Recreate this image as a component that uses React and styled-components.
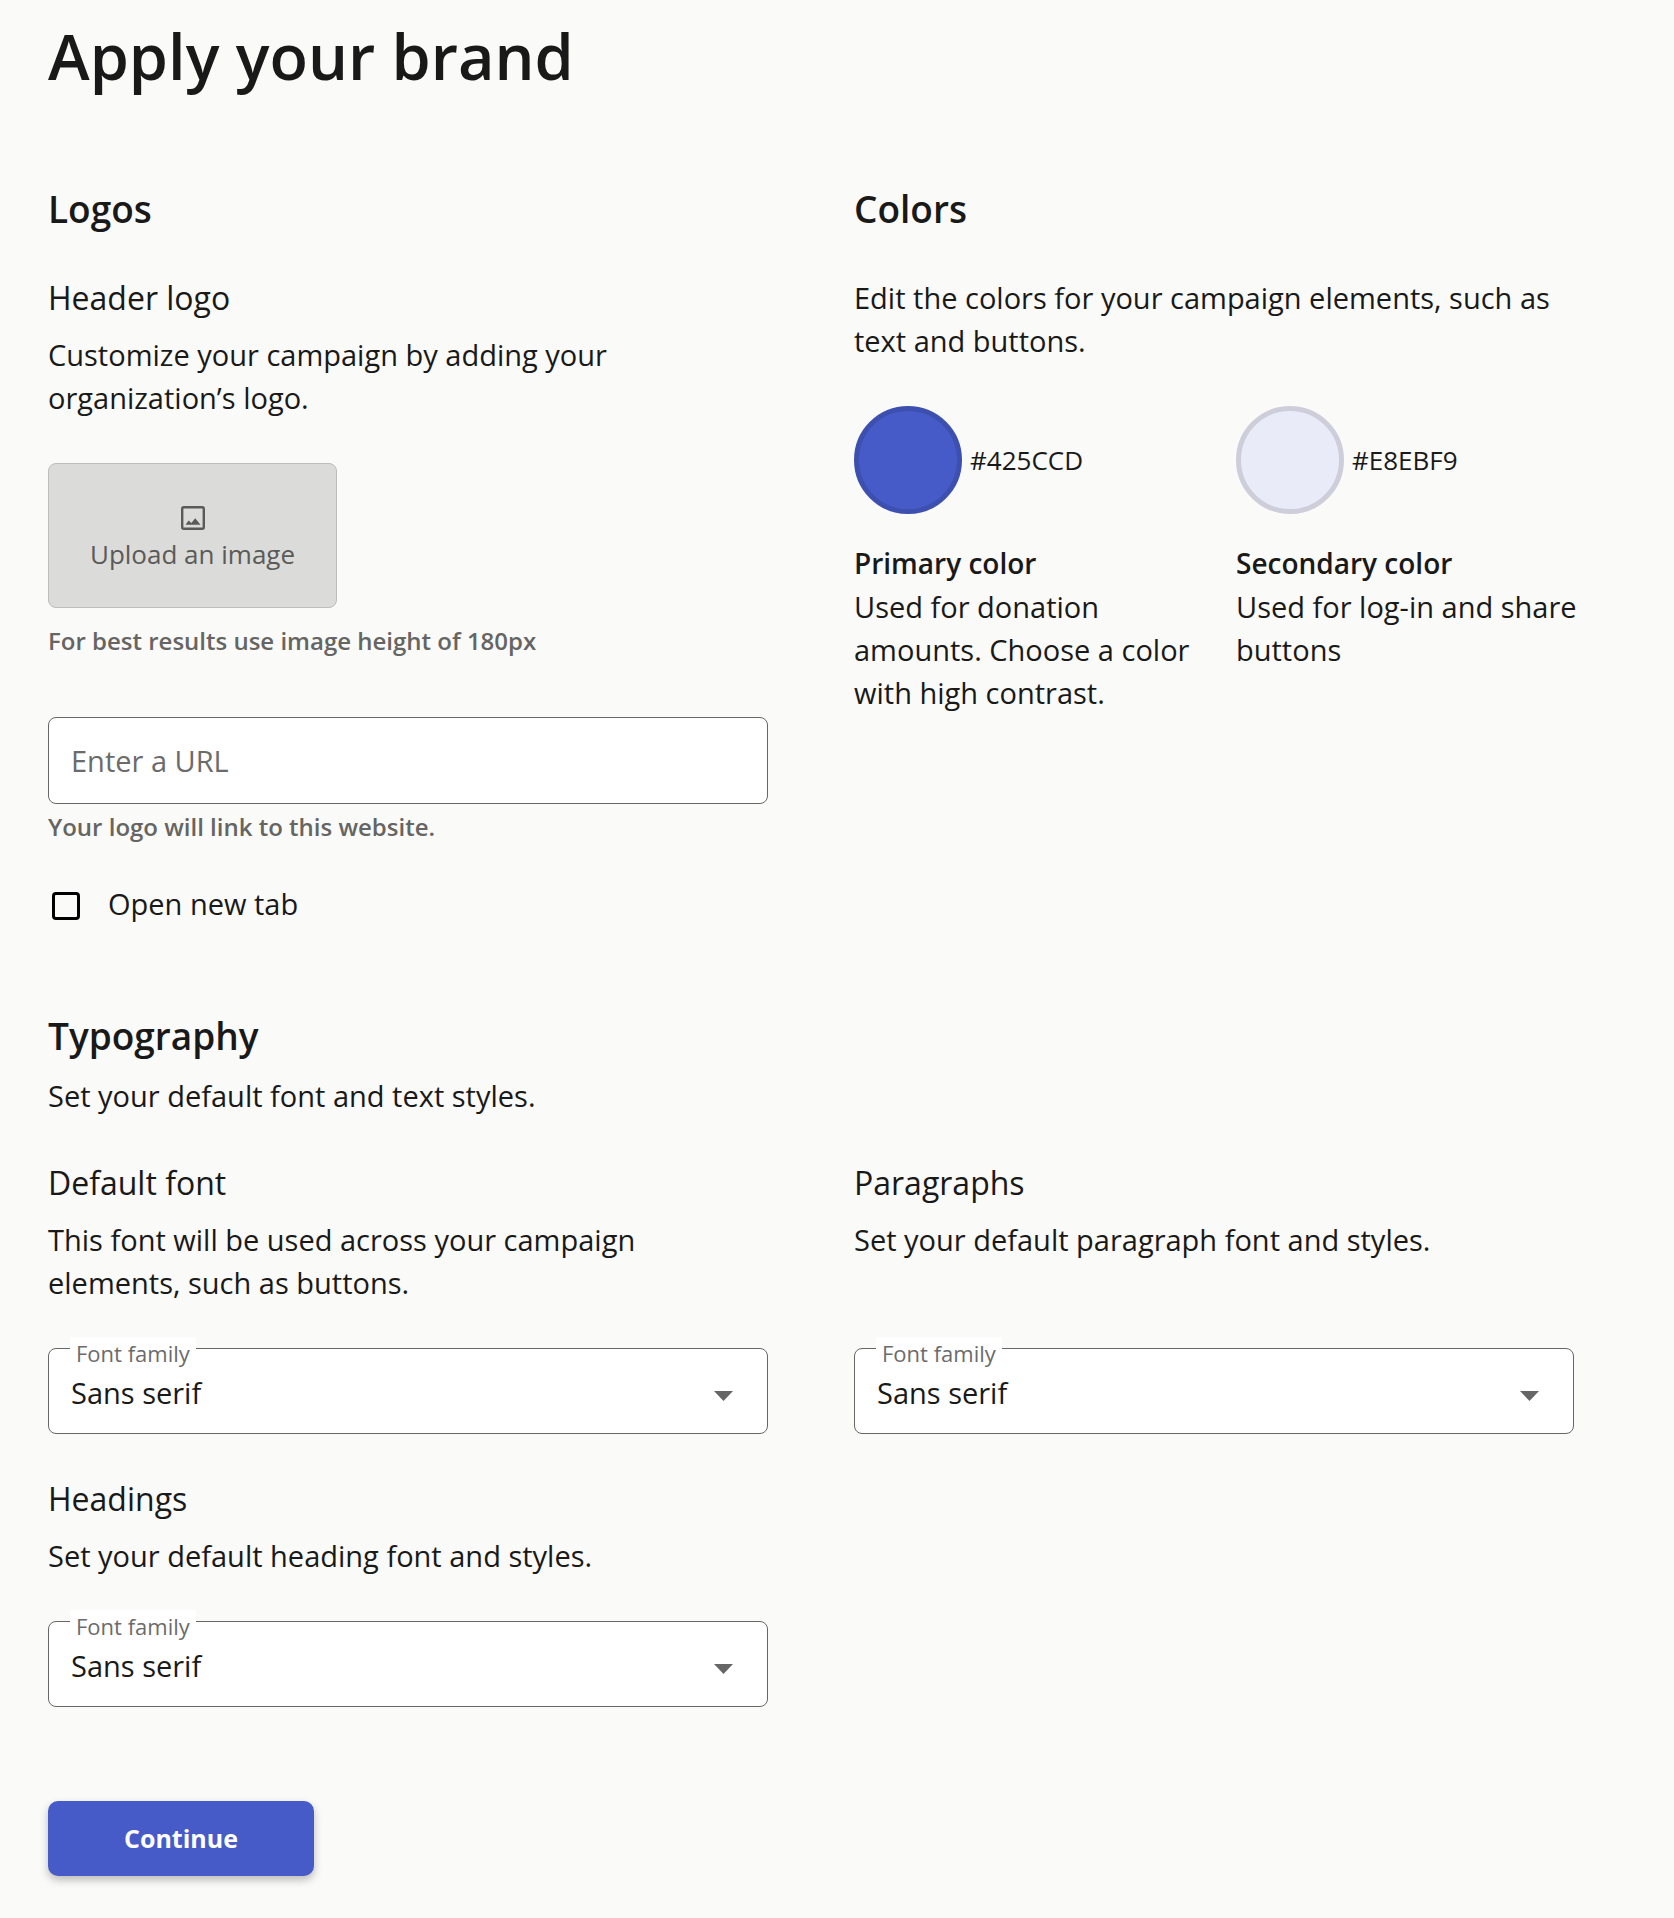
import React, { useState } from "react";
import styled, { createGlobalStyle } from "styled-components";

const GlobalStyle = createGlobalStyle`
  *, *::before, *::after { box-sizing: border-box; }
  body {
    margin: 0;
    background: #fafaf8;
    color: #191919;
    font-family: "Open Sans", Lato, sans-serif;
    font-size: 29px;
    line-height: 43px;
  }
  h1, h2, h3, p { margin: 0; }
  button, input, select { font: inherit; color: inherit; }
`;

const Page = styled.main`
  padding: 16px 100px 40px 48px;
`;

const Title = styled.h1`
  margin-bottom: 89px;
  font-size: 63px;
  line-height: 80px;
  font-weight: 600;
`;

const Columns = styled.div`
  display: grid;
  grid-template-columns: repeat(2, minmax(0, 1fr));
  column-gap: 86px;
  row-gap: 43px;
`;

const SectionTitle = styled.h2`
  margin-bottom: ${(p) => (p.$tight ? 14 : 43)}px;
  font-size: 37px;
  line-height: 48px;
  font-weight: 600;
`;

const SubTitle = styled.h3`
  margin-bottom: 13px;
  font-size: 32px;
  line-height: 44px;
  font-weight: 400;
`;

const Text = styled.p`
  margin-bottom: ${(p) => (p.$flush ? 0 : 44)}px;
`;

const UploadButton = styled.button`
  display: flex;
  flex-direction: column;
  align-items: center;
  justify-content: center;
  gap: 6px;
  width: 289px;
  height: 145px;
  padding: 6px 0 0;
  border: 1px solid #bdbdbb;
  border-radius: 8px;
  background: #dbdbd9;
  color: #5a5a58;
  font-size: 26px;
  line-height: 36px;
  cursor: pointer;
`;

const Helper = styled.p`
  margin: ${(p) => (p.$near ? "4px 0 36px" : "14px 0 57px")};
  color: #656563;
  font-size: 24px;
  line-height: 38px;
  font-weight: 600;
`;

const TextInput = styled.input`
  display: block;
  width: 100%;
  height: 87px;
  padding: 0 22px;
  border: 1px solid #666;
  border-radius: 8px;
  background: #fff;
  &::placeholder { color: #6b6b6b; opacity: 1; }
`;

const CheckLabel = styled.label`
  display: flex;
  align-items: center;
  gap: 28px;
  padding-left: 4px;
  cursor: pointer;
`;

const Checkbox = styled.input`
  appearance: none;
  width: 28px;
  height: 28px;
  margin: 4px 0 0;
  border: 3px solid #000;
  border-radius: 4px;
  &:checked { background: #425ccd; }
`;

const Swatches = styled.div`
  display: grid;
  grid-template-columns: repeat(2, minmax(0, 1fr));
  column-gap: 40px;
  margin-right: -4px;
`;

const SwatchRow = styled.div`
  display: flex;
  align-items: center;
  gap: 8px;
  margin-bottom: 28px;
  font-size: 26px;
`;

const Swatch = styled.button`
  flex: none;
  width: 108px;
  height: 108px;
  padding: 0;
  border: 5px solid ${(p) => p.$ring};
  border-radius: 50%;
  background: ${(p) => p.$color};
  cursor: pointer;
`;

const SwatchName = styled.strong`
  display: block;
  font-size: 28px;
  font-weight: 600;
`;

const Typography = styled.section`
  margin-top: 87px;
`;

const FontGroup = styled.div`
  display: flex;
  flex-direction: column;
`;

const Field = styled.div`
  position: relative;
  margin-top: auto;
`;

const FieldLabel = styled.label`
  position: absolute;
  top: -11px;
  left: 22px;
  padding: 0 6px;
  background: #fff;
  color: #6b6b6b;
  font-size: 22px;
  line-height: 32px;
`;

const Select = styled.select`
  appearance: none;
  display: block;
  width: 100%;
  height: 86px;
  padding: 2px 60px 0 22px;
  border: 1px solid #666;
  border-radius: 8px;
  background: #fff;
`;

const Caret = styled.svg`
  position: absolute;
  right: 35px;
  top: 43px;
  width: 19px;
  height: 10px;
  fill: #666;
  pointer-events: none;
`;

const ContinueButton = styled.button`
  display: block;
  width: 266px;
  height: 75px;
  margin-top: 94px;
  padding: 0;
  border: 0;
  border-radius: 10px;
  background: #465bc7;
  color: #fff;
  font-size: 25px;
  font-weight: 700;
  box-shadow: 0 4px 8px rgba(0, 0, 0, 0.26);
  cursor: pointer;
`;

function ImageIcon() {
  return (
    <svg width="24" height="24" viewBox="0 0 24 24" fill="none" aria-hidden="true">
      <rect x="1.2" y="1.2" width="21.6" height="21.6" rx="1.6" stroke="currentColor" strokeWidth="2.4" />
      <path d="M4.5 18.8 7.6 14.4l2.8 2.6 3.8-4.8 5.3 6.6z" fill="currentColor" />
    </svg>
  );
}

function FontSelect({ id }) {
  return (
    <Field>
      <Select id={id} defaultValue="sans">
        <option value="sans">Sans serif</option>
        <option value="serif">Serif</option>
      </Select>
      <FieldLabel htmlFor={id}>Font family</FieldLabel>
      <Caret viewBox="0 0 19 10" aria-hidden="true">
        <path d="M0 0h19L9.5 10z" />
      </Caret>
    </Field>
  );
}

function ColorChoice({ name, hex, color, ring, children }) {
  return (
    <div>
      <SwatchRow>
        <Swatch type="button" aria-label={name} $color={color} $ring={ring} />
        <span>{hex}</span>
      </SwatchRow>
      <SwatchName>{name}</SwatchName>
      <Text $flush>{children}</Text>
    </div>
  );
}

export default function App() {
  const [newTab, setNewTab] = useState(false);
  return (
    <>
      <GlobalStyle />
      <Page>
        <Title>Apply your brand</Title>
        <Columns>
          <section>
            <SectionTitle>Logos</SectionTitle>
            <SubTitle>Header logo</SubTitle>
            <Text>Customize your campaign by adding your organization’s logo.</Text>
            <UploadButton type="button">
              <ImageIcon />
              Upload an image
            </UploadButton>
            <Helper>For best results use image height of 180px</Helper>
            <TextInput type="url" aria-label="Enter a URL" placeholder="Enter a URL" />
            <Helper $near>Your logo will link to this website.</Helper>
            <CheckLabel>
              <Checkbox type="checkbox" checked={newTab} onChange={(e) => setNewTab(e.target.checked)} />
              Open new tab
            </CheckLabel>
          </section>
          <section>
            <SectionTitle>Colors</SectionTitle>
            <Text>Edit the colors for your campaign elements, such as text and buttons.</Text>
            <Swatches>
              <ColorChoice name="Primary color" hex="#425CCD" color="#465bc7" ring="#3d50b0">
                Used for donation amounts. Choose a color with high contrast.
              </ColorChoice>
              <ColorChoice name="Secondary color" hex="#E8EBF9" color="#e9ebf8" ring="#cecdda">
                Used for log-in and share buttons
              </ColorChoice>
            </Swatches>
          </section>
        </Columns>
        <Typography>
          <SectionTitle $tight>Typography</SectionTitle>
          <Text>Set your default font and text styles.</Text>
          <Columns>
            <FontGroup>
              <SubTitle>Default font</SubTitle>
              <Text>This font will be used across your campaign elements, such as buttons.</Text>
              <FontSelect id="default-font" />
            </FontGroup>
            <FontGroup>
              <SubTitle>Paragraphs</SubTitle>
              <Text>Set your default paragraph font and styles.</Text>
              <FontSelect id="paragraph-font" />
            </FontGroup>
            <FontGroup>
              <SubTitle>Headings</SubTitle>
              <Text>Set your default heading font and styles.</Text>
              <FontSelect id="heading-font" />
            </FontGroup>
          </Columns>
        </Typography>
        <ContinueButton type="button">Continue</ContinueButton>
      </Page>
    </>
  );
}
